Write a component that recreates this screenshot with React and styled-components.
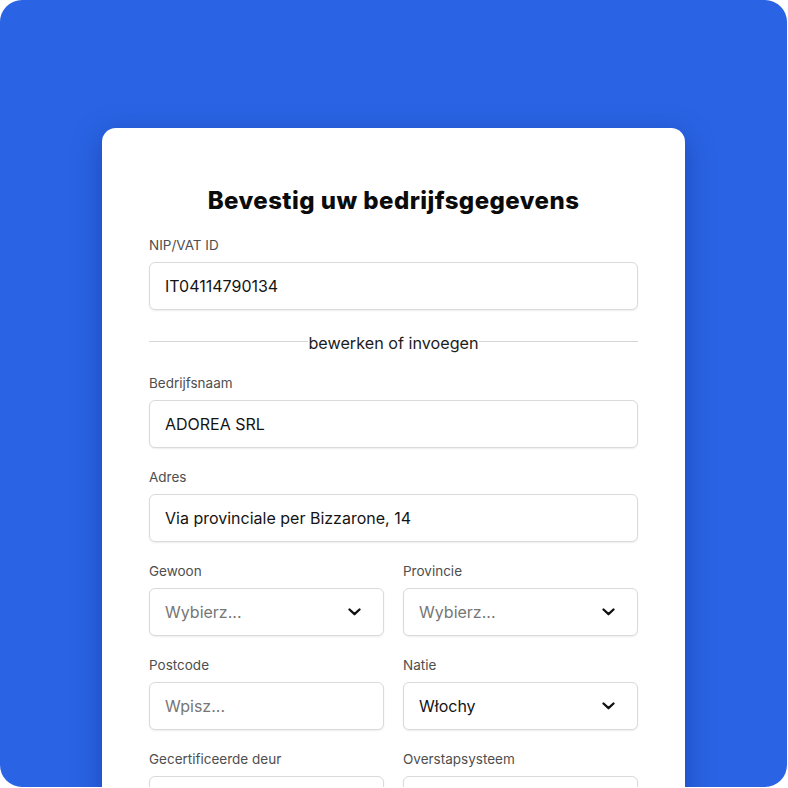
import React from "react";
import styled, { createGlobalStyle } from "styled-components";

const Global = createGlobalStyle`
  html, body { margin: 0; padding: 0; background: #ffffff; }
  body { font-family: Inter, "Noto Sans", Arial, sans-serif; -webkit-font-smoothing: antialiased; }
  * { box-sizing: border-box; }
`;

const Panel = styled.div`
  width: 787px;
  height: 787px;
  border-radius: 22px;
  background: #2a64e4;
  overflow: hidden;
  padding: 128px 0 0 102px;
`;

const Card = styled.div`
  width: 583px;
  background: #ffffff;
  border-radius: 14px;
  box-shadow: 0 8px 30px rgba(10, 30, 110, 0.38);
  padding: 58px 47px 60px;
  display: flex;
  flex-direction: column;
`;

const Title = styled.h1`
  margin: 0 0 21px;
  font-size: 24px;
  line-height: 30px;
  font-weight: 800;
  text-align: center;
  color: #0b0b0b;
  letter-spacing: 0.45px;
`;

const Form = styled.div`
  display: flex;
  flex-direction: column;
  gap: 21px;
`;

const Field = styled.div`
  display: flex;
  flex-direction: column;
  gap: 8px;
  min-width: 0;
`;

const Label = styled.div`
  font-size: 13.5px;
  line-height: 17px;
  color: #4e4e4e;
`;

const Box = styled.div`
  height: 48px;
  border: 1px solid #dadada;
  border-radius: 6px;
  box-shadow: 0 1px 2px rgba(0, 0, 0, 0.07);
  display: flex;
  align-items: center;
  justify-content: space-between;
  padding: 0 22px 0 15px;
  font-size: 16px;
  color: ${(p) => (p.$placeholder ? "#767676" : "#141414")};
  background: #fff;
`;

const Divider = styled.div`
  display: flex;
  align-items: center;
  margin: 2px 0 1px;
  font-size: 16.2px;
  line-height: 20px;
  color: #1c1c1c;
  &::before, &::after {
    content: "";
    flex: 1;
    height: 1px;
    background: #d6d6d6;
    margin-bottom: 4px;
  }
`;

const Row = styled.div`
  display: grid;
  grid-template-columns: 1fr 1fr;
  column-gap: 19px;
`;

const Chevron = () => (
  <svg width="13" height="8" viewBox="0 0 13 8" fill="none">
    <polyline
      points="1.5,1.5 6.5,6.2 11.5,1.5"
      stroke="#111"
      strokeWidth="2.3"
      strokeLinecap="round"
      strokeLinejoin="round"
    />
  </svg>
);

const TextField = ({ label, value, placeholder, select }) => (
  <Field>
    <Label>{label}</Label>
    <Box $placeholder={!value}>
      <span>{value || placeholder}</span>
      {select && <Chevron />}
    </Box>
  </Field>
);

export default function App() {
  return (
    <>
      <Global />
      <Panel>
        <Card>
          <Title>Bevestig uw bedrijfsgegevens</Title>
          <Form>
            <TextField label="NIP/VAT ID" value="IT04114790134" />
            <Divider>bewerken of invoegen</Divider>
            <TextField label="Bedrijfsnaam" value="ADOREA SRL" />
            <TextField label="Adres" value="Via provinciale per Bizzarone, 14" />
            <Row>
              <TextField label="Gewoon" placeholder="Wybierz..." select />
              <TextField label="Provincie" placeholder="Wybierz..." select />
            </Row>
            <Row>
              <TextField label="Postcode" placeholder="Wpisz..." />
              <TextField label="Natie" value="Włochy" select />
            </Row>
            <Row>
              <TextField label="Gecertificeerde deur" placeholder="" />
              <TextField label="Overstapsysteem" placeholder="" />
            </Row>
          </Form>
        </Card>
      </Panel>
    </>
  );
}
